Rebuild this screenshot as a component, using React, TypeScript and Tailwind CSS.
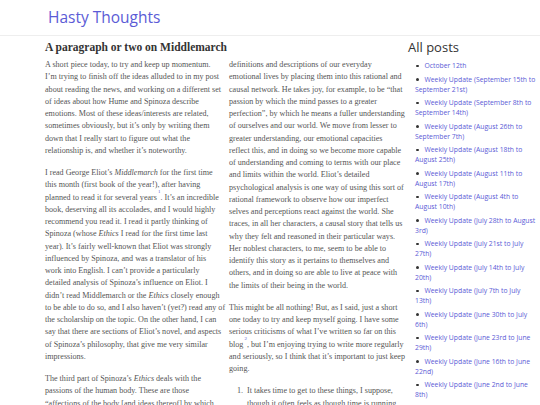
import React from "react";

const posts = [
  ["October 12th"],
  ["Weekly Update (September 15th to", "September 21st)"],
  ["Weekly Update (September 8th to", "September 14th)"],
  ["Weekly Update (August 26th to", "September 7th)"],
  ["Weekly Update (August 18th to", "August 25th)"],
  ["Weekly Update (August 11th to", "August 17th)"],
  ["Weekly Update (August 4th to", "August 10th)"],
  ["Weekly Update (July 28th to August", "3rd)"],
  ["Weekly Update (July 21st to July", "27th)"],
  ["Weekly Update (July 14th to July", "20th)"],
  ["Weekly Update (July 7th to July", "13th)"],
  ["Weekly Update (June 30th to July", "6th)"],
  ["Weekly Update (June 23rd to June", "29th)"],
  ["Weekly Update (June 16th to June", "22nd)"],
  ["Weekly Update (June 2nd to June", "8th)"],
];

function Fn({ n }: { n: number }) {
  return (
    <sup className="ml-[1px] align-super text-[5px] leading-none text-[#5b5bd6]">{n}</sup>
  );
}

export default function App() {
  return (
    <div className="min-h-screen overflow-hidden bg-white">
      <header className="flex h-[36px] items-center border-b border-[#eeeeee] pl-[48px]">
        <span className="font-['Open_Sans',sans-serif] text-[15.5px] text-[#5b5bd6]">
          Hasty Thoughts
        </span>
      </header>

      <div className="flex">
        <main className="ml-[45px] w-[360px] font-['Liberation_Serif',serif] text-[#555555]">
          <h2 className="mt-[4px] text-[11.5px] font-bold leading-[14px] text-[#333333]">
            A paragraph or two on Middlemarch
          </h2>
          <div className="mt-[5px] grid grid-cols-[176px_176px] gap-x-[8px] whitespace-nowrap text-[8.1px] leading-[12.25px]">
            <div className="space-y-[10px]">
              <p>
                A short piece today, to try and keep up momentum.<br />
                I’m trying to finish off the ideas alluded to in my post<br />
                about reading the news, and working on a different set<br />
                of ideas about how Hume and Spinoza describe<br />
                emotions. Most of these ideas/interests are related,<br />
                sometimes obviously, but it’s only by writing them<br />
                down that I really start to figure out what the<br />
                relationship is, and whether it’s noteworthy.
              </p>
              <p>
                I read George Eliot’s <em>Middlemarch</em> for the first time<br />
                this month (first book of the year!), after having<br />
                planned to read it for several years<Fn n={1} />. It’s an incredible<br />
                book, deserving all its accolades, and I would highly<br />
                recommend you read it. I read it partly thinking of<br />
                Spinoza (whose <em>Ethics</em> I read for the first time last<br />
                year). It’s fairly well-known that Eliot was strongly<br />
                influenced by Spinoza, and was a translator of his<br />
                work into English. I can’t provide a particularly<br />
                detailed analysis of Spinoza’s influence on Eliot. I<br />
                didn’t read Middlemarch or the <em>Ethics</em> closely enough<br />
                to be able to do so, and I also haven’t (yet?) read any of<br />
                the scholarship on the topic. On the other hand, I can<br />
                say that there are sections of Eliot’s novel, and aspects<br />
                of Spinoza’s philosophy, that give me very similar<br />
                impressions.
              </p>
              <p>
                The third part of Spinoza’s <em>Ethics</em> deals with the<br />
                passions of the human body. These are those<br />
                “affections of the body [and ideas thereof] by which
              </p>
            </div>
            <div className="space-y-[10px]">
              <p>
                definitions and descriptions of our everyday<br />
                emotional lives by placing them into this rational and<br />
                causal network. He takes joy, for example, to be “that<br />
                passion by which the mind passes to a greater<br />
                perfection”, by which he means a fuller understanding<br />
                of ourselves and our world. We move from lesser to<br />
                greater understanding, our emotional capacities<br />
                reflect this, and in doing so we become more capable<br />
                of understanding and coming to terms with our place<br />
                and limits within the world. Eliot’s detailed<br />
                psychological analysis is one way of using this sort of<br />
                rational framework to observe how our imperfect<br />
                selves and perceptions react against the world. She<br />
                traces, in all her characters, a causal story that tells us<br />
                why they felt and reasoned in their particular ways.<br />
                Her noblest characters, to me, seem to be able to<br />
                identify this story as it pertains to themselves and<br />
                others, and in doing so are able to live at peace with<br />
                the limits of their being in the world.
              </p>
              <p>
                This might be all nothing! But, as I said, just a short<br />
                one today to try and keep myself going. I have some<br />
                serious criticisms of what I’ve written so far on this<br />
                blog<Fn n={2} />, but I’m enjoying trying to write more regularly<br />
                and seriously, so I think that it’s important to just keep<br />
                going.
              </p>
              <ol className="pl-[8px]">
                <li className="flex">
                  <span className="w-[10px] shrink-0">1.</span>
                  <span>
                    It takes time to get to these things, I suppose,<br />
                    though it often feels as though time is running
                  </span>
                </li>
              </ol>
            </div>
          </div>
        </main>

        <aside className="ml-[3px] flex-1 font-['Open_Sans',sans-serif]">
          <h3 className="mt-[3px] text-[13px] leading-[16px] text-[#333333]">All posts</h3>
          <ul className="mt-[6px] space-y-[3.5px] whitespace-nowrap pl-[7px] text-[6.8px] leading-[10px] text-[#5b5bd6]">
            {posts.map((lines, i) => (
              <li key={i}>
                <span className="ml-[1px] mr-[6px] inline-block h-[2.5px] w-[2.5px] rounded-full bg-[#333333] align-middle" />
                {lines[0]}
                {lines[1] && (
                  <>
                    <br />
                    {lines[1]}
                  </>
                )}
              </li>
            ))}
          </ul>
        </aside>
      </div>
    </div>
  );
}
